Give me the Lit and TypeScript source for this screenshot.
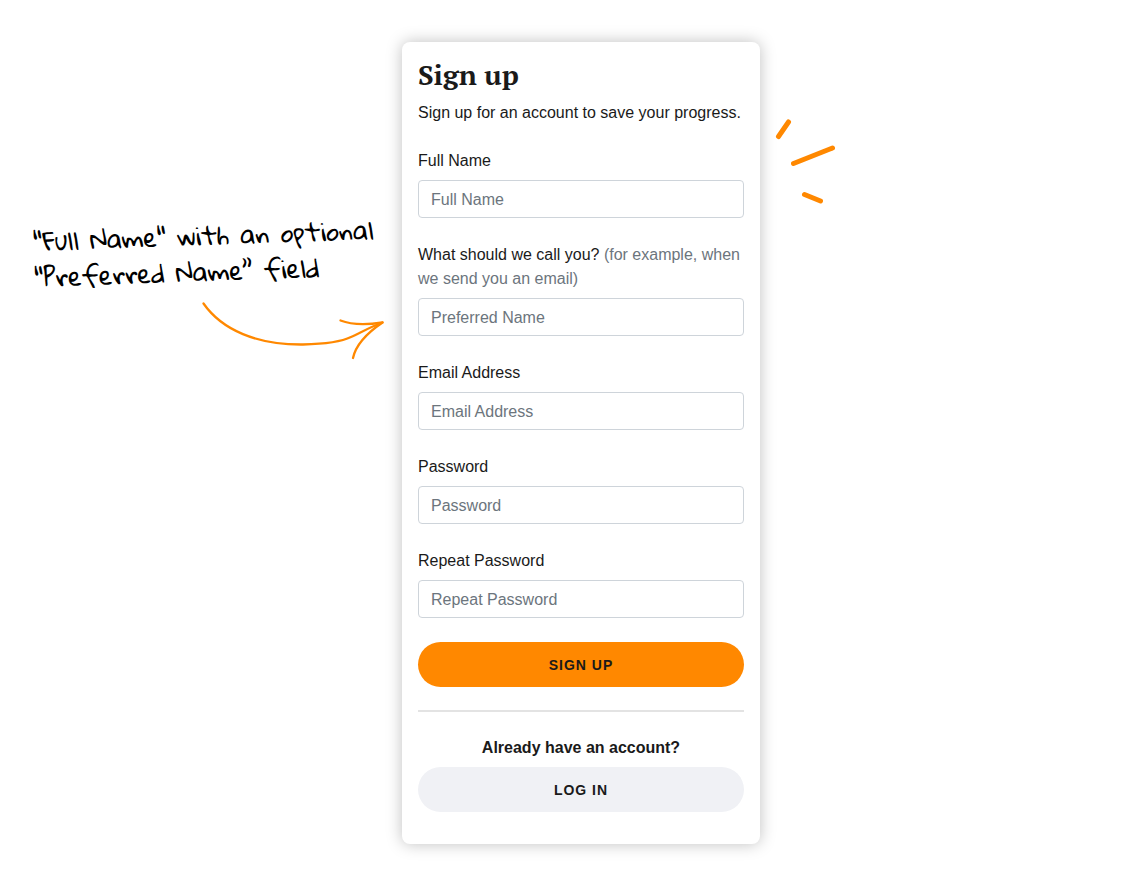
import { LitElement, html, css, nothing } from "lit";
import { customElement, property } from "lit/decorators.js";

@customElement("form-field")
class FormField extends LitElement {
  @property() label = "";
  @property() hint = "";
  @property() placeholder = "";
  @property() type = "text";

  static styles = css`
    :host {
      display: block;
    }
    .label {
      display: block;
      padding: 1px 0 7px;
      line-height: 24px;
    }
    .hint {
      color: #6c757d;
    }
    .input {
      display: block;
      box-sizing: border-box;
      width: 100%;
      height: 38px;
      padding: 7px 12px 5px;
      border: 1px solid #ced4da;
      border-radius: 4px;
      background: #fff;
      color: #1a1a1a;
      font: inherit;
    }
    .input::placeholder {
      color: #6c757d;
      opacity: 1;
    }
  `;

  render() {
    return html`
      <label class="label" for="field"
        >${this.label}${this.hint
          ? html` <span class="hint">${this.hint}</span>`
          : nothing}</label
      >
      <input class="input" id="field" type=${this.type} placeholder=${this.placeholder} />
    `;
  }
}

const fields = [
  { label: "Full Name", placeholder: "Full Name", type: "text", hint: "" },
  {
    label: "What should we call you?",
    placeholder: "Preferred Name",
    type: "text",
    hint: "(for example, when we send you an email)",
  },
  { label: "Email Address", placeholder: "Email Address", type: "email", hint: "" },
  { label: "Password", placeholder: "Password", type: "password", hint: "" },
  { label: "Repeat Password", placeholder: "Repeat Password", type: "password", hint: "" },
];

@customElement("app-root")
class AppRoot extends LitElement {
  static styles = css`
    :host {
      display: block;
      color: #1a1a1a;
      background: #fff;
      font: 16px/24px "Liberation Sans", Arial, sans-serif;
    }
    .page {
      display: grid;
      grid-template-columns: minmax(0, 402fr) 358px minmax(0, 362fr);
      align-items: start;
      padding: 42px 0;
    }
    .note {
      justify-self: end;
      padding: 175px 16px 0 0;
    }
    .note-text {
      margin: 0;
      padding-right: 12px;
      color: #000;
      font: 25px/36px "Gloria Hallelujah", "Lato", sans-serif;
      transform: rotate(-2deg);
      white-space: nowrap;
    }
    .arrow {
      display: block;
      margin: 11px 0 0 auto;
    }
    .card {
      padding: 16px 16px 32px;
      border-radius: 8px;
      background: #fff;
      box-shadow: 0 0 16px rgba(0, 0, 0, 0.25);
    }
    .title {
      margin: 0 0 8px;
      font: bold 28px/34px "PT Serif", "Liberation Serif", serif;
    }
    .intro {
      margin: 0 0 24px;
      padding-top: 1px;
      line-height: 23px;
    }
    .form {
      display: grid;
      gap: 24px;
    }
    .button {
      display: block;
      width: 100%;
      height: 45px;
      padding: 2px 0 0;
      border: 0;
      border-radius: 23px;
      color: #1a1a1a;
      font: bold 14px/21px "Liberation Sans", Arial, sans-serif;
      letter-spacing: 1px;
      text-transform: uppercase;
    }
    .primary {
      background: #ff8800;
    }
    .secondary {
      background: #f0f1f5;
    }
    .rule {
      height: 2px;
      margin: 23px 0;
      border: 0;
      background: #e3e3e3;
    }
    .already {
      margin: 0;
      padding: 1px 0 7px;
      font-weight: bold;
      text-align: center;
    }
    .sparks {
      display: block;
      margin: 74px 0 0 14px;
    }
  `;

  render() {
    return html`
      <main class="page">
        <aside class="note">
          <p class="note-text">"Full Name" with an optional<br />"Preferred Name” field</p>
          <svg class="arrow" width="186" height="62" viewBox="200 300 186 62" fill="none"
            stroke="#ff8800" stroke-width="2.3" stroke-linecap="round" stroke-linejoin="round" aria-hidden="true">
            <path d="M203.500 303.500C222 330 257 345 303 344.500C324 344 341 342 351 337C360 333 368 328 382.500 322.500" />
            <path d="M340.500 320.500C352 325 366 325 382.500 322.500C370 331 356 344 353 358" />
          </svg>
        </aside>
        <section class="card">
          <h1 class="title">Sign up</h1>
          <p class="intro">Sign up for an account to save your progress.</p>
          <form class="form" @submit=${(e: Event) => e.preventDefault()}>
            ${fields.map(
              (f) => html`<form-field
                .label=${f.label}
                .hint=${f.hint}
                .placeholder=${f.placeholder}
                .type=${f.type}
              ></form-field>`
            )}
            <button class="button primary" type="submit">Sign up</button>
          </form>
          <hr class="rule" />
          <p class="already">Already have an account?</p>
          <button class="button secondary" type="button">Log in</button>
        </section>
        <svg class="sparks" width="64" height="90" viewBox="774 116 64 90" fill="none"
          stroke="#ff8800" stroke-width="5" stroke-linecap="round" aria-hidden="true">
          <path d="M778.500 136.500L788.500 122" />
          <path d="M793.500 163.500Q815 155 832.500 148" />
          <path d="M804.500 194.500L820.500 201" />
        </svg>
      </main>
    `;
  }
}
